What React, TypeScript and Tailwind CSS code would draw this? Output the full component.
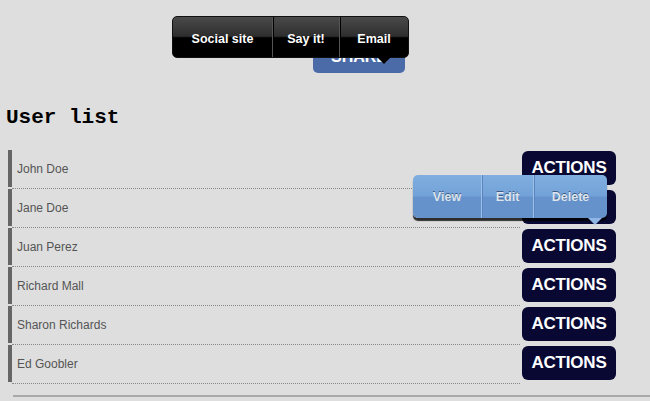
import React from 'react';

const users = ['John Doe', 'Jane Doe', 'Juan Perez', 'Richard Mall', 'Sharon Richards', 'Ed Goobler'];

function ShareMenu() {
  const items = ['Social site', 'Say it!', 'Email'];
  const widths = ['w-[99px]', 'w-[67px]', 'w-[69px]'];
  return (
    <div className="absolute left-[172px] top-[16px] z-10">
      <div className="flex h-[42px] rounded-[5px] overflow-hidden border border-[#111] bg-[linear-gradient(to_bottom,#4a4a4a_0%,#2e2e2e_48%,#000_52%,#000_100%)]">
        {items.map((item, i) => (
          <div
            key={item}
            className={`${widths[i]} flex items-center justify-center pt-[4px] text-white text-[12.5px] font-bold font-['Liberation_Sans',sans-serif] ${i > 0 ? 'border-l border-l-[#555] shadow-[inset_1px_0_0_#000]' : ''}`}
          >
            {item}
          </div>
        ))}
      </div>
      <div className="absolute left-[205px] top-[41px] w-0 h-0 border-l-[7px] border-r-[7px] border-t-[7px] border-l-transparent border-r-transparent border-t-black" />
    </div>
  );
}

function ActionsMenu() {
  const items = ['View', 'Edit', 'Delete'];
  const widths = ['w-[68px]', 'w-[52px]', 'w-[74px]'];
  return (
    <div className="absolute left-[413px] top-[175px] z-10">
      <div className="flex h-[43px] rounded-[5px] overflow-hidden shadow-[0_3px_1px_rgba(0,0,0,0.8)] bg-[linear-gradient(to_bottom,#80aee0_0%,#73a2d8_48%,#6592cb_52%,#6592cb_100%)]">
        {items.map((item, i) => (
          <div
            key={item}
            className={`${widths[i]} flex items-center justify-center pt-[1px] text-[#dde5ee] text-[12.5px] font-bold font-['Liberation_Sans',sans-serif] [text-shadow:0_-1px_0_rgba(40,60,90,0.7)] ${i > 0 ? 'border-l border-l-[#9cc0ea] shadow-[inset_1px_0_0_#5b86bd]' : ''}`}
          >
            {item}
          </div>
        ))}
      </div>
      <div className="absolute left-[175px] top-[43px] w-0 h-0 border-l-[7px] border-r-[7px] border-t-[7px] border-l-transparent border-r-transparent border-t-[#8fb6e4]" />
    </div>
  );
}

export default function App() {
  return (
    <div className="relative w-[650px] h-[401px] overflow-hidden bg-[#dedede] font-['Liberation_Sans',Arial,sans-serif] flow-root">
      <div className="relative h-[96px] pt-[40px]">
        <button className="ml-[313px] w-[92px] h-[33px] rounded-[5px] bg-[#4a6aa8] text-white text-[16px] font-bold flex items-center justify-center">
          SHARE
        </button>
        <ShareMenu />
      </div>

      <h2 className="ml-[6px] mt-[10px] text-[21px] leading-[24px] font-bold text-black font-['Liberation_Mono',monospace]">
        User list
      </h2>

      <ul className="mt-[20px] flex flex-col">
        {users.map((name) => (
          <li key={name} className="flex items-start h-[39px]">
            <div className="ml-[8px] w-[4px] h-[37px] bg-[#666]" />
            <div className="w-[508px] h-[39px] border-b border-dotted border-[#888] flex items-center pl-[5px] pb-[1px] text-[12px] text-[#555]">
              {name}
            </div>
            <button className="ml-[2px] mt-[1px] w-[94px] h-[34px] rounded-[6px] bg-[#080833] text-white text-[17px] font-bold tracking-[-0.2px]">
              ACTIONS
            </button>
          </li>
        ))}
      </ul>

      <div className="ml-[13px] mt-[11px] border-t-2 border-[#a8a8a8]" />

      <ActionsMenu />
    </div>
  );
}
